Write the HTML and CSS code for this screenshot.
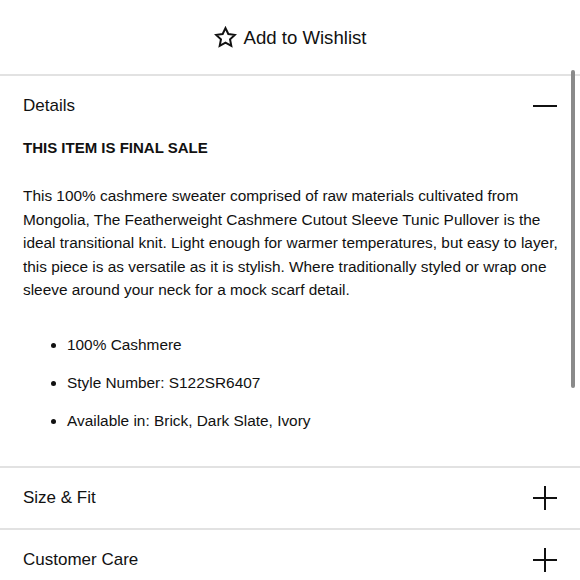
FILE: index.html
```html
<!DOCTYPE html>
<html>
<head>
<meta charset="utf-8">
<link rel="stylesheet" href="styles.css">
</head>
<body>
<div class="page">
  <div class="wishlist">
    <svg class="star" width="23" height="23" viewBox="0 0 24 24"><path d="M12 2.2l2.95 6.2 6.75.85-4.95 4.7 1.3 6.75L12 17.4l-6.05 3.3 1.3-6.75-4.95-4.7 6.75-.85z" fill="none" stroke="#111" stroke-width="2.1" stroke-linejoin="miter"/></svg>
    <span>Add to Wishlist</span>
  </div>
  <section class="acc open">
    <div class="acc-head"><span>Details</span><span class="minus"></span></div>
    <div class="acc-body">
      <p class="final">THIS ITEM IS FINAL SALE</p>
      <p class="desc">This 100% cashmere sweater comprised of raw materials cultivated from Mongolia, The Featherweight Cashmere Cutout Sleeve Tunic Pullover is the ideal transitional knit. Light enough for warmer temperatures, but easy to layer, this piece is as versatile as it is stylish. Where traditionally styled or wrap one sleeve around your neck for a mock scarf detail.</p>
      <ul class="bullets">
        <li>100% Cashmere</li>
        <li>Style Number: S122SR6407</li>
        <li>Available in: Brick, Dark Slate, Ivory</li>
      </ul>
    </div>
  </section>
  <section class="acc">
    <div class="acc-head"><span>Size &amp; Fit</span><span class="plus"></span></div>
  </section>
  <section class="acc">
    <div class="acc-head"><span>Customer Care</span><span class="plus"></span></div>
  </section>
  <div class="scrollbar"></div>
</div>
</body>
</html>
```
FILE: styles.css
```css
* { box-sizing: border-box; }
html, body { margin: 0; padding: 0; background: #fff; }
body {
  font-family: "Liberation Sans", Arial, sans-serif;
  color: #111;
  overflow: hidden;
}
.page { position: relative; width: 580px; height: 580px; overflow: hidden; }
.wishlist {
  height: 74px;
  display: flex;
  align-items: center;
  justify-content: center;
  gap: 7px;
  font-size: 18.6px;
  padding-top: 2px;
}
.star { display: block; margin-top: -1px; }
.acc { border-top: 2px solid #e2e2e2; }
.acc-head {
  height: 60px;
  padding: 0 23px;
  display: flex;
  align-items: center;
  justify-content: space-between;
  font-size: 17px;
}
.minus, .plus {
  position: relative;
  width: 24px;
  height: 24px;
  display: block;
}
.minus::before, .plus::before {
  content: "";
  position: absolute;
  left: 0; right: 0;
  top: 11px;
  height: 2px;
  background: #111;
}
.plus::after {
  content: "";
  position: absolute;
  top: 0; bottom: 0;
  left: 11px;
  width: 2px;
  background: #111;
}
.acc-body { padding: 0 15px 35px 23px; }
.final {
  margin: 2px 0 0;
  font-weight: bold;
  font-size: 15px;
  line-height: 20px;
}
.desc {
  margin: 26px 0 0;
  font-size: 15.4px;
  line-height: 23.6px;
}
.bullets {
  margin: 33px 0 0;
  padding-left: 44px;
  font-size: 15.4px;
  line-height: 20px;
}
.bullets li { margin-bottom: 18px; }
.bullets li:last-child { margin-bottom: 0; }
.scrollbar {
  position: absolute;
  left: 571px;
  top: 70px;
  width: 4px;
  height: 318px;
  border-radius: 2px;
  background: #8a8a8a;
}
```
